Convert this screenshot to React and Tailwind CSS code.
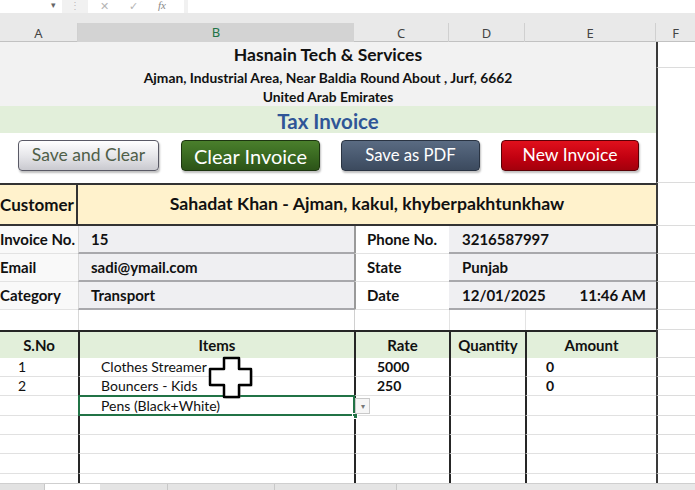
import React from 'react';

const GRID = 'grid grid-cols-[78px_276px_95px_76px_131px_39px]';

const ITEMS = [
  { sno: '1', item: 'Clothes Streamer', rate: '5000', amount: '0', h: 'h-[19px]' },
  { sno: '2', item: 'Bouncers - Kids', rate: '250', amount: '0', h: 'h-[19px]' },
  { sno: '', item: 'Pens (Black+White)', rate: '', amount: '', h: 'h-[20px]', selected: true },
  { h: 'h-[19px]' },
  { h: 'h-[19px]' },
  { h: 'h-[20px]' },
  { h: 'h-[9px]', last: true }
];

const INFO = [
  { label: 'Invoice No.', value: '15', label2: 'Phone No.', value2: '3216587997' },
  { label: 'Email', value: 'sadi@ymail.com', label2: 'State', value2: 'Punjab' },
  { label: 'Category', value: 'Transport', label2: 'Date', value2: '12/01/2025', time: '11:46 AM' }
];

const FCell = ({ noLine }) => (
  <div className={`bg-white border-l-2 border-l-[#3a3a3a] ${noLine ? '' : 'border-b border-b-[#dcdcdc]'}`} />
);

const Button = ({ children, className }) => (
  <button className={`h-[31px] rounded-[4px] border-[1.5px] shadow-[1px_2px_2px_rgba(0,0,0,0.25)] flex items-center justify-center ${className}`}>
    {children}
  </button>
);

const App = () => {
  return (
    <div className="relative w-[695px] h-[490px] overflow-hidden bg-white font-['Lato',sans-serif] text-[#111]">
      {/* formula bar */}
      <div className="flex h-[13px] bg-[#f1f1f1] overflow-hidden">
        <div className="w-[62px] bg-white flex justify-end items-start pr-[6px] text-[9px] leading-[10px] text-[#666]">▾</div>
        <div className="w-[26px] flex justify-center items-start text-[10px] leading-[11px] text-[#bbb]">⋮</div>
        <div className="w-[96px] bg-white flex items-start text-[#b5b5b5] leading-[11px]">
          <span className="ml-[12px] text-[11px]">✕</span>
          <span className="ml-[20px] text-[11px]">✓</span>
          <span className="ml-[20px] text-[11px] italic font-['Liberation_Serif',serif] text-[#888]">fx</span>
        </div>
        <div className="ml-[4px] flex-1 bg-white" />
      </div>
      <div className="h-[10px] bg-[#e9e9e9]" />
      {/* column headers */}
      <div className={`${GRID} h-[19px] bg-[#e9e9e9] text-[13px] text-[#444] font-['Noto_Sans',sans-serif] border-b border-b-[#c2c2c2]`}>
        <div className="flex items-center justify-center border-r border-r-[#d0d0d0]">A</div>
        <div className="flex items-center justify-center bg-[#d3d3d3] text-[#217346] border-b-2 border-b-[#217346] -mb-[1px]">B</div>
        <div className="flex items-center justify-center border-r border-r-[#d0d0d0]">C</div>
        <div className="flex items-center justify-center border-r border-r-[#d0d0d0]">D</div>
        <div className="flex items-center justify-center border-r border-r-[#d0d0d0]">E</div>
        <div className="flex items-center justify-center">F</div>
      </div>

      {/* company heading */}
      <div className={`${GRID} h-[26px]`}>
        <div className="col-span-5 bg-[#f2f2f2] flex items-center justify-center text-[17.5px] font-bold">Hasnain Tech &amp; Services</div>
        <FCell />
      </div>
      <div className={`${GRID} h-[19px]`}>
        <div className="col-span-5 bg-[#f2f2f2] flex items-center justify-center text-[13.8px] font-bold">Ajman, Industrial Area, Near Baldia Round About , Jurf, 6662</div>
        <FCell />
      </div>
      <div className={`${GRID} h-[19px]`}>
        <div className="col-span-5 bg-[#f2f2f2] flex items-center justify-center text-[13.8px] font-bold">United Arab Emirates</div>
        <FCell />
      </div>
      <div className={`${GRID} h-[27px]`}>
        <div className="col-span-5 bg-[#e2efda] flex items-center justify-center text-[20.5px] font-bold text-[#2f5597]">Tax Invoice</div>
        <FCell />
      </div>

      {/* action buttons */}
      <div className={`${GRID} h-[50px]`}>
        <div className="col-span-5 bg-white flex items-start pt-[7px] pl-[18px] gap-[21px]">
          <Button className="w-[141px] mr-[1px] bg-[linear-gradient(#ffffff,#e4e4e8_55%,#c9c9cf)] border-[#5a5a66] text-[#4f5e48] text-[17.5px]">Save and Clear</Button>
          <Button className="w-[139px] bg-[linear-gradient(#4a7f2c,#37661f_60%,#2c5318)] border-[#1d3510] text-white text-[20px]">Clear Invoice</Button>
          <Button className="w-[139px] bg-[linear-gradient(#5a6b82,#47576d_60%,#3c4a5e)] border-[#2a3443] text-white text-[16.7px]">Save as PDF</Button>
          <Button className="w-[138px] bg-[linear-gradient(#e0101c,#c00010_60%,#a3000c)] border-[#5b0006] text-white text-[17.5px]">New Invoice</Button>
        </div>
        <FCell />
      </div>

      {/* customer */}
      <div className={`${GRID} h-[43px]`}>
        <div className="bg-[#fff2cc] border-y-2 border-r-2 border-[#333] flex items-center text-[17px] font-bold">Customer</div>
        <div className="col-span-4 bg-[#fff2cc] border-y-2 border-[#333] flex items-center justify-center text-[17.7px] font-bold">
          Sahadat Khan - Ajman, kakul, khyberpakhtunkhaw
        </div>
        <FCell />
      </div>

      {/* invoice info */}
      {INFO.map((row) => (
        <div key={row.label} className={`${GRID} h-[28px] text-[15px] font-bold`}>
          <div className="bg-[#f9f9f9] border-b border-b-[#e3e3e3] flex items-center">{row.label}</div>
          <div className="bg-[#efeff2] border-l border-l-[#d8d8d8] border-b-2 border-b-[#a8a8ac] flex items-center pl-[12px]">{row.value}</div>
          <div className="bg-white border-l-2 border-l-[#9a9a9a] border-b border-b-[#e3e3e3] flex items-center pl-[11px]">{row.label2}</div>
          <div className="col-span-2 bg-[#efeff2] border-b-2 border-b-[#a8a8ac] flex items-center justify-between pl-[13px] pr-[10px]">
            <span>{row.value2}</span>
            {row.time && <span>{row.time}</span>}
          </div>
          <FCell />
        </div>
      ))}

      {/* spacer row */}
      <div className={`${GRID} h-[20px]`}>
        <div className="bg-white" />
        <div className="bg-white border-l border-l-[#d8d8d8]" />
        <div className="bg-white border-l border-l-[#d0d0d0]" />
        <div className="bg-white border-l border-l-[#e3e3e3]" />
        <div className="bg-white border-l border-l-[#e3e3e3]" />
        <FCell />
      </div>

      {/* item table header */}
      <div className={`${GRID} h-[28px] text-[15px] font-bold`}>
        <div className="bg-[#e2efda] border-t-2 border-t-[#262626] flex items-center justify-center">S.No</div>
        <div className="bg-[#e2efda] border-t-2 border-t-[#262626] border-l-2 border-l-[#262626] flex items-center justify-center">Items</div>
        <div className="bg-[#e2efda] border-t-2 border-t-[#262626] border-l-2 border-l-[#262626] flex items-center justify-center">Rate</div>
        <div className="bg-[#e2efda] border-t-2 border-t-[#262626] border-l-2 border-l-[#262626] flex items-center justify-center">Quantity</div>
        <div className="bg-[#e2efda] border-t-2 border-t-[#262626] border-l-2 border-l-[#262626] flex items-center justify-center">Amount</div>
        <FCell />
      </div>

      {/* item rows */}
      {ITEMS.map((row, i) => {
        const line = row.last ? '' : 'border-b border-b-[#e1e1e1]';
        return (
          <div key={i} className={`${GRID} ${row.h} text-[14px] leading-none`}>
            <div className={`bg-white ${line} flex items-center pl-[18px]`}>{row.sno}</div>
            <div className={`relative bg-white ${line} border-l-2 border-l-[#262626] flex items-center pl-[21px]`}>
              {row.item}
              {row.selected && (
                <>
                  <div className="absolute -left-[2px] -top-[1px] -right-[1px] -bottom-[1px] border-2 border-[#217346]" />
                  <div className="absolute right-[-4px] bottom-[-4px] w-[6px] h-[6px] bg-[#217346] border border-white" />
                  <div className="absolute left-full ml-[1px] top-[2px] w-[15px] h-[16px] bg-[#f6f6f6] border border-[#c9c9c9] flex items-center justify-center text-[8px] text-[#777]">▾</div>
                </>
              )}
            </div>
            <div className={`bg-white ${line} border-l-2 border-l-[#262626] flex items-center pl-[21px] font-bold`}>{row.rate}</div>
            <div className={`bg-white ${line} border-l-2 border-l-[#262626]`} />
            <div className={`bg-white ${line} border-l-2 border-l-[#262626] flex items-center pl-[19px] font-bold`}>{row.amount}</div>
            <FCell noLine={row.last} />
          </div>
        );
      })}

      {/* sheet tabs / scroll strip */}
      <div className="flex h-[7px] bg-[#ececec] border-t border-t-[#cfcfcf]">
        <div className="w-[45px] bg-[#e2e2e2] border-r border-r-[#c8c8c8]" />
        <div className="w-[55px] bg-white" />
        <div className="w-[68px] bg-[#e4e4e4] border-r border-r-[#c8c8c8]" />
        <div className="w-[107px] bg-[#e4e4e4] border-r border-r-[#c8c8c8]" />
        <div className="w-[122px] bg-[#e4e4e4] border-r border-r-[#c8c8c8]" />
        <div className="flex-1 bg-[#e8e8e8]" />
      </div>

      {/* cell cursor */}
      <svg className="absolute left-[208px] top-[356px]" width="46" height="44" viewBox="0 0 46 44">
        <polygon
          points="17.5,3.5 32.5,3.5 32.5,14.5 44.5,14.5 44.5,30.5 32.5,30.5 32.5,42.5 17.5,42.5 17.5,30.5 3.5,30.5 3.5,14.5 17.5,14.5"
          fill="#9a9a9a"
          opacity="0.6"
        />
        <polygon
          points="16,2 31,2 31,13 43,13 43,29 31,29 31,41 16,41 16,29 2,29 2,13 16,13"
          fill="#ffffff"
          stroke="#000000"
          strokeWidth="2.5"
          strokeLinejoin="round"
        />
      </svg>
    </div>
  );
};

export default App;
